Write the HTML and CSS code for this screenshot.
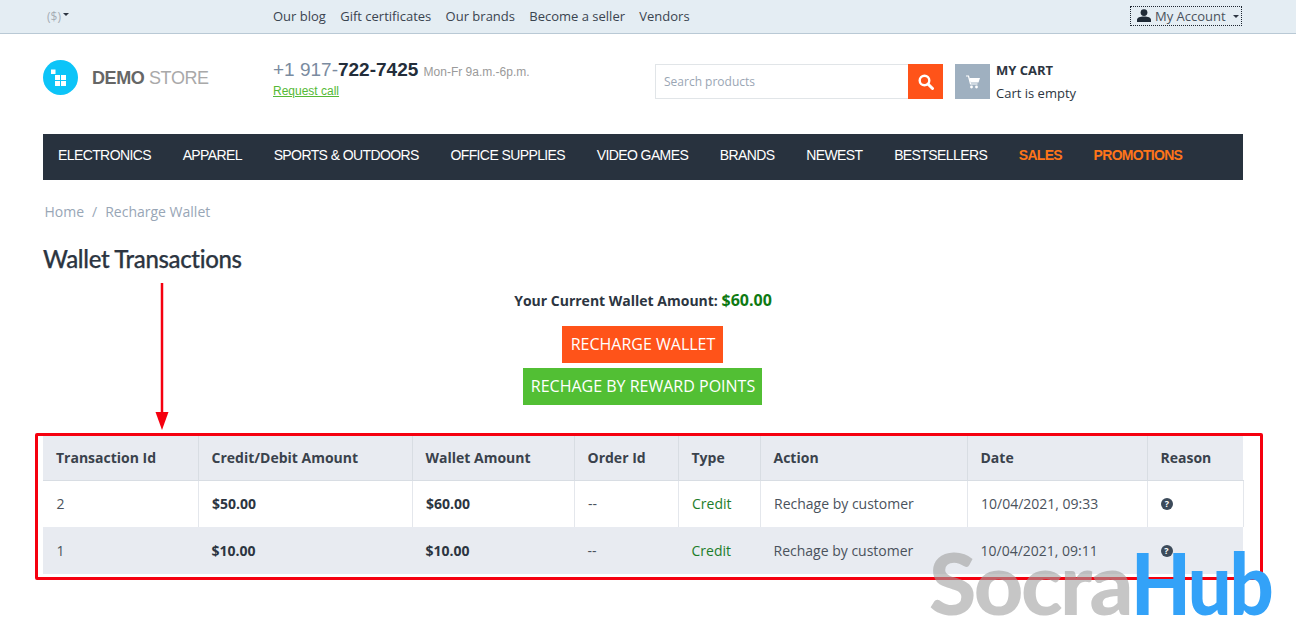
FILE: index.html
```html
<!DOCTYPE html>
<html lang="en">
<head>
<meta charset="utf-8">
<title>Wallet Transactions</title>
<link rel="stylesheet" href="styles.css">
</head>
<body>
<header class="topbar">
  <div class="wrap topbar-inner">
    <div class="currency">($)<span class="caret caret-small"></span></div>
    <nav class="toplinks">
      <a>Our blog</a><a>Gift certificates</a><a>Our brands</a><a>Become a seller</a><a>Vendors</a>
    </nav>
    <div class="account">
      <svg class="user-icon" viewBox="0 0 14 14" width="14" height="14"><circle cx="7" cy="3.6" r="3.4" fill="#1f2a36"/><path d="M0 13v-2.2C0 8.6 3 7.4 7 7.4s7 1.2 7 3.4V13z" fill="#1f2a36"/></svg>
      <span>My Account</span><span class="caret"></span>
    </div>
  </div>
</header>

<div class="wrap">
  <div class="masthead">
    <div class="logo">
      <svg class="logo-mark" viewBox="0 0 35 35" width="35" height="35">
        <circle cx="17.5" cy="17.5" r="17.5" fill="#0cc4f8"/>
        <rect x="8" y="9.500" width="4.500" height="4.500" fill="#fff"/>
        <rect x="12" y="15" width="5" height="5" fill="#fff"/><rect x="18" y="15" width="5" height="5" fill="#fff"/>
        <rect x="12" y="21" width="5" height="5" fill="#fff"/><rect x="18" y="21" width="5" height="5" fill="#fff"/>
      </svg>
      <div class="logo-text"><b>DEMO</b> STORE</div>
    </div>
    <div class="phone">
      <div class="phone-line"><span class="phone-pre">+1 917-</span><b>722-7425</b> <span class="hours">Mon-Fr 9a.m.-6p.m.</span></div>
      <a class="request">Request call</a>
    </div>
    <form class="search">
      <div class="search-input">Search products</div>
      <div class="search-btn">
        <svg viewBox="0 0 16 16" width="16" height="16"><circle cx="6.500" cy="6.500" r="4.800" fill="none" stroke="#fff" stroke-width="2.400"/><path d="M10 10l4.500 4.500" stroke="#fff" stroke-width="3" stroke-linecap="round"/></svg>
      </div>
    </form>
    <div class="cart">
      <div class="cart-icon">
        <svg viewBox="0 0 14 14" width="14" height="14"><path d="M0 1h2.500l2 8h7" fill="none" stroke="#fff" stroke-width="1.200"/><path d="M3.400 3H14l-1.500 4.600H4.500z" fill="#fff"/><circle cx="5.500" cy="12" r="1.400" fill="#fff"/><circle cx="10.500" cy="12" r="1.400" fill="#fff"/></svg>
      </div>
      <div class="cart-text"><div class="cart-title">MY CART</div><div class="cart-empty">Cart is empty</div></div>
    </div>
  </div>

  <nav class="mainnav">
    <a>ELECTRONICS</a><a>APPAREL</a><a>SPORTS &amp; OUTDOORS</a><a>OFFICE SUPPLIES</a><a>VIDEO GAMES</a><a>BRANDS</a><a>NEWEST</a><a>BESTSELLERS</a><a class="hot">SALES</a><a class="hot">PROMOTIONS</a>
  </nav>

  <div class="crumbs"><a>Home</a><span class="sep">/</span><a>Recharge Wallet</a></div>
  <h1 class="title">Wallet Transactions</h1>

  <div class="wallet">
    <div class="balance">Your Current Wallet Amount: <span class="balance-val">$60.00</span></div>
    <a class="btn btn-orange">RECHARGE WALLET</a>
    <a class="btn btn-green">RECHAGE BY REWARD POINTS</a>
  </div>

  <table class="tx">
    <colgroup>
      <col class="c1"><col class="c2"><col class="c3"><col class="c4"><col class="c5"><col class="c6"><col class="c7"><col class="c8">
    </colgroup>
    <thead>
      <tr><th>Transaction Id</th><th>Credit/Debit Amount</th><th>Wallet Amount</th><th>Order Id</th><th>Type</th><th>Action</th><th>Date</th><th>Reason</th></tr>
    </thead>
    <tbody>
      <tr><td>2</td><td><b>$50.00</b></td><td><b>$60.00</b></td><td>--</td><td class="credit">Credit</td><td>Rechage by customer</td><td>10/04/2021, 09:33</td><td><span class="q">?</span></td></tr>
      <tr class="alt"><td>1</td><td><b>$10.00</b></td><td><b>$10.00</b></td><td>--</td><td class="credit">Credit</td><td>Rechage by customer</td><td>10/04/2021, 09:11</td><td><span class="q">?</span></td></tr>
    </tbody>
  </table>
</div>

<div class="redbox"></div>
<svg class="arrow" viewBox="0 0 14 148" width="14" height="148"><path d="M7 0V132" stroke="#f5000f" stroke-width="2.500"/><path d="M0.500 129h13l-6.500 18z" fill="#f5000f"/></svg>
<div class="watermark"><span class="wm-a">Socra</span><span class="wm-b">Hub</span></div>
</body>
</html>
```
FILE: styles.css
```css
* { box-sizing: border-box; }
html, body { margin: 0; padding: 0; }
body { font-family: "Open Sans", sans-serif; font-size: 13px; color: #2c3541; background: #fff; height: 622px; overflow: hidden; position: relative; }
a { color: inherit; text-decoration: none; }
.wrap { width: 1200px; margin-left: 43px; }
.topbar { height: 34px; background: #e4edf3; border-bottom: 1px solid #b9c9d5; }
.topbar-inner { display: flex; align-items: center; height: 33px; padding-bottom: 1px; }
.currency { width: 230px; padding-left: 4px; font-size: 12px; color: #a6adb5; display: flex; align-items: center; gap: 2px; }
.caret { display: inline-block; width: 0; height: 0; border: 3px solid transparent; border-top-color: #2c3541; border-bottom: 0; margin-left: 7px; }
.caret-small { border-width: 3px; border-bottom: 0; margin: 0 0 3px 0; }
.toplinks { display: flex; gap: 14.300px; font-size: 13px; color: #3a4450; flex: 1; }
.account { width: 112px; height: 20px; border: 1px dotted #1c2530; display: flex; align-items: center; padding-left: 6px; font-size: 13px; color: #4a525c; margin-right: 1px; }
.user-icon { margin-right: 4px; }
.masthead { height: 100px; display: flex; align-items: flex-start; }
.logo { width: 230px; display: flex; align-items: center; padding-top: 26px; }
.logo-mark { flex: none; }
.logo-text { font-family: "Liberation Sans", sans-serif; font-size: 18px; color: #a9a9a9; margin: 2px 0 0 14px; letter-spacing: -.4px; }
.logo-text b { color: #666; }
.phone { width: 382px; padding-top: 24px; font-family: "Liberation Sans", sans-serif; }
.phone-line { font-size: 19px; line-height: 23px; white-space: nowrap; }
.phone-pre { color: #7a8ba0; }
.phone-line b { color: #232d3a; }
.hours { font-size: 12px; color: #9a9a9a; }
.request { display: block; font-size: 12px; color: #55b936; text-decoration: underline; line-height: 16px; margin-top: -1px; }
.search { display: flex; width: 288px; margin-top: 30px; height: 35px; }
.search-input { flex: 1; border: 1px solid #e1e5e8; border-right: 0; font-size: 12px; color: #9aa6b4; line-height: 33px; padding-left: 8px; }
.search-btn { width: 35px; background: #ff5319; display: flex; align-items: center; justify-content: center; }
.cart { display: flex; margin-left: 12px; margin-top: 30px; }
.cart-icon { width: 35px; height: 35px; background: #9fb0c0; display: flex; align-items: center; justify-content: center; }
.cart-text { margin-left: 6px; margin-top: -5px; font-size: 13px; line-height: 23px; }
.cart-title { font-weight: 700; font-size: 13px; }
.mainnav { height: 46px; background: #28323e; display: flex; align-items: center; padding: 0 0 5px 15px; gap: 31.650px; font-family: "Liberation Sans", sans-serif; font-size: 14px; color: #fff; letter-spacing: -.6px; white-space: nowrap; }
.mainnav .hot { color: #ff7519; font-weight: 700; letter-spacing: -.7px; }
.crumbs { margin-top: 22px; padding-left: 1.500px; font-size: 14px; line-height: 19px; color: #98a6b6; }
.sep { margin: 0 8px; }
.title { margin: 23px 0 0; font-family: "Lato", sans-serif; font-weight: 500; font-size: 24px; line-height: 30px; letter-spacing: -.35px; -webkit-text-stroke: .25px #2c3541; color: #2c3541; }
.wallet { display: flex; flex-direction: column; align-items: center; margin-top: 16px; padding-right: 2px; }
.balance { font-size: 14px; font-weight: 700; line-height: 20px; color: #2c3541; margin-left: 2px; }
.balance-val { font-size: 16px; color: #0e7a12; font-weight: 700; }
.btn { height: 37px; line-height: 37px; color: #fff; font-size: 16px; display: block; padding-left: 2px; }
.btn-orange { background: #ff5319; margin-top: 15px; width: 161px; text-align: center; }
.btn-green { background: #52bf34; margin-top: 5px; width: 239px; text-align: center; }
.tx { width: 1200px; table-layout: fixed; border-collapse: collapse; margin-top: 31px; font-size: 14px; }
.c1 { width: 155px; } .c2 { width: 214px; } .c3 { width: 162px; } .c4 { width: 104px; } .c5 { width: 82px; } .c6 { width: 207px; } .c7 { width: 180px; } .c8 { width: 96px; }
.tx th { height: 44px; background: #e8ebf1; text-align: left; padding: 0 0 0 13px; font-weight: 700; color: #3a424c; border-right: 1px solid #d8dde3; border-bottom: 1px solid #d8dde3; white-space: nowrap; }
.tx th:last-child { border-right: 0; }
.tx td { height: 47px; padding: 0 0 0 13.500px; color: #4a525c; border-right: 1px solid #e4e7ec; white-space: nowrap; }
.tx td b { color: #2c3541; }
.tx tr.alt td { background: #e8ebf1; border-right: 0; }
.tx td.credit { color: #1c7d2a; }
.q { display: inline-flex; width: 12px; height: 12px; border-radius: 50%; background: #3c4a5a; color: #fff; font-size: 9px; font-weight: 700; align-items: center; justify-content: center; line-height: 12px; vertical-align: 2px; }
.redbox { position: absolute; left: 35px; top: 433px; width: 1228px; height: 147px; border: 3px solid #f5000f; border-radius: 2px; }
.arrow { position: absolute; left: 155px; top: 283px; }
.watermark { position: absolute; left: 929px; top: 542px; font-family: "Lato", sans-serif; font-weight: 900; font-size: 86px; line-height: 80px; letter-spacing: -2.500px; white-space: nowrap; }
.wm-a { color: rgba(160,160,160,.6); }
.wm-b { display: inline-block; color: #33a2f8; transform: scaleX(.9); transform-origin: left center; }
```
